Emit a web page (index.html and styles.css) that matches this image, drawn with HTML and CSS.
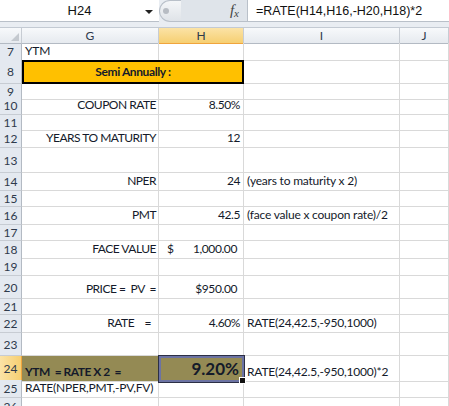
FILE: index.html
```html
<!DOCTYPE html>
<html>

<head>
    <title>YTM - Semi Annually</title>
    <link rel="stylesheet" href="styles.css">
</head>

<body>
    <!-- Formula bar -->
    <div class="formula-bar">
        <div class="name-box">
            <span>H24</span>
            <span class="dropdown"></span>
        </div>
        <div class="splitter"><span class="grip"></span></div>
        <div class="fx"><i>f</i><i class="x">x</i></div>
        <div class="formula">=RATE(H14,H16,-H20,H18)*2</div>
    </div>

    <!-- Sheet -->
    <div class="sheet">
        <div class="row head">
            <div class="corner"></div>
            <div class="ch">G</div>
            <div class="ch active">H</div>
            <div class="ch">I</div>
            <div class="ch">J</div>
        </div>

        <div class="row h17">
            <div class="rh">7</div>
            <div class="c">YTM</div>
            <div class="c"></div>
            <div class="c"></div>
            <div class="c"></div>
        </div>
        <div class="row h24">
            <div class="rh">8</div>
            <div class="c merged title">Semi Annually :</div>
            <div class="c"></div>
            <div class="c"></div>
        </div>
        <div class="row h13">
            <div class="rh">9</div>
            <div class="c"></div>
            <div class="c"></div>
            <div class="c"></div>
            <div class="c"></div>
        </div>
        <div class="row h18">
            <div class="rh">10</div>
            <div class="c right">COUPON RATE</div>
            <div class="c num">8.50%</div>
            <div class="c"></div>
            <div class="c"></div>
        </div>
        <div class="row h14">
            <div class="rh">11</div>
            <div class="c"></div>
            <div class="c"></div>
            <div class="c"></div>
            <div class="c"></div>
        </div>
        <div class="row h19">
            <div class="rh">12</div>
            <div class="c right">YEARS TO MATURITY</div>
            <div class="c num">12</div>
            <div class="c"></div>
            <div class="c"></div>
        </div>
        <div class="row h25">
            <div class="rh">13</div>
            <div class="c"></div>
            <div class="c"></div>
            <div class="c"></div>
            <div class="c"></div>
        </div>
        <div class="row h18">
            <div class="rh">14</div>
            <div class="c right">NPER</div>
            <div class="c num">24</div>
            <div class="c">(years to maturity x 2)</div>
            <div class="c"></div>
        </div>
        <div class="row h16">
            <div class="rh">15</div>
            <div class="c"></div>
            <div class="c"></div>
            <div class="c"></div>
            <div class="c"></div>
        </div>
        <div class="row h18">
            <div class="rh">16</div>
            <div class="c right">PMT</div>
            <div class="c num">42.5</div>
            <div class="c">(face value x coupon rate)/2</div>
            <div class="c"></div>
        </div>
        <div class="row h16">
            <div class="rh">17</div>
            <div class="c"></div>
            <div class="c"></div>
            <div class="c"></div>
            <div class="c"></div>
        </div>
        <div class="row h17">
            <div class="rh">18</div>
            <div class="c right">FACE VALUE</div>
            <div class="c money"><span>$</span><span>1,000.00</span></div>
            <div class="c"></div>
            <div class="c"></div>
        </div>
        <div class="row h18">
            <div class="rh">19</div>
            <div class="c"></div>
            <div class="c"></div>
            <div class="c"></div>
            <div class="c"></div>
        </div>
        <div class="row h23">
            <div class="rh">20</div>
            <div class="c right">PRICE =  PV  =</div>
            <div class="c num currency">$950.00</div>
            <div class="c"></div>
            <div class="c"></div>
        </div>
        <div class="row h16">
            <div class="rh">21</div>
            <div class="c"></div>
            <div class="c"></div>
            <div class="c"></div>
            <div class="c"></div>
        </div>
        <div class="row h18">
            <div class="rh">22</div>
            <div class="c right">RATE    =  </div>
            <div class="c num">4.60%</div>
            <div class="c">RATE(24,42.5,-950,1000)</div>
            <div class="c"></div>
        </div>
        <div class="row h23">
            <div class="rh">23</div>
            <div class="c"></div>
            <div class="c"></div>
            <div class="c"></div>
            <div class="c"></div>
        </div>
        <div class="row h24">
            <div class="rh active">24</div>
            <div class="c olive bold">YTM  = RATE X 2  =</div>
            <div class="c olive num result selected">9.20%<span class="handle"></span></div>
            <div class="c">RATE(24,42.5,-950,1000)*2</div>
            <div class="c"></div>
        </div>
        <div class="row h18">
            <div class="rh">25</div>
            <div class="c">RATE(NPER,PMT,-PV,FV)</div>
            <div class="c"></div>
            <div class="c"></div>
            <div class="c"></div>
        </div>
        <div class="row h18">
            <div class="rh">26</div>
            <div class="c"></div>
            <div class="c"></div>
            <div class="c"></div>
            <div class="c"></div>
        </div>
    </div>
</body>

</html>
```

FILE: styles.css
```css
body {
    margin: 0;
    width: 449px;
    height: 406px;
    overflow: hidden;
    background: white;
    font-family: Lato, "Liberation Sans", sans-serif;
    color: #111;
}

/* formula bar */
.formula-bar {
    display: flex;
    height: 28px;
    box-sizing: border-box;
    padding-bottom: 5px;
    background: #e9edf2;
    border-bottom: 1px solid #c3cad3;
}

.name-box {
    width: 159px;
    display: flex;
    align-items: center;
    justify-content: center;
    position: relative;
    background: white;
    border-bottom: 1px solid #b9c0c9;
    font-family: "Liberation Sans", sans-serif;
    font-size: 13px;
    color: #111;
}

.dropdown {
    position: absolute;
    right: 6px;
    top: 10px;
    border-left: 4px solid transparent;
    border-right: 4px solid transparent;
    border-top: 4px solid #222;
}

.splitter {
    width: 18px;
    background: linear-gradient(#f4f6f8, #dfe3e8);
    border: 1px solid #b9c0c9;
    border-right: none;
    border-radius: 11px 0 0 11px;
    display: flex;
    align-items: center;
    padding-left: 3px;
}

.grip {
    width: 6px;
    height: 6px;
    border-radius: 50%;
    background: #b7bcc3;
}

.fx {
    width: 66px;
    display: flex;
    align-items: center;
    justify-content: flex-end;
    padding-right: 8px;
    box-sizing: border-box;
    background: #dfe4ea;
    border-bottom: 1px solid #b9c0c9;
    font-family: "Liberation Serif", serif;
    font-size: 15px;
    color: #444;
}

.fx .x {
    font-size: 11px;
    margin-top: 5px;
}

.formula {
    flex: 1;
    display: flex;
    align-items: center;
    padding-left: 8px;
    background: white;
    border-left: 1px solid #b9c0c9;
    border-bottom: 1px solid #b9c0c9;
    font-family: "Liberation Sans", sans-serif;
    font-size: 12.5px;
    color: #111;
}

/* sheet grid */
.row {
    display: grid;
    grid-template-columns: 22px 137px 85px 156px 49px;
}

.row > div {
    box-sizing: border-box;
    border-right: 1px solid #d9d9d9;
    border-bottom: 1px solid #d9d9d9;
    display: flex;
    align-items: flex-end;
    white-space: pre;
    font-size: 12px;
    letter-spacing: -0.2px;
    padding: 0 3px 2px;
    min-width: 0;
    color: #141a2a;
}

.head {
    height: 15px;
}

.head > div {
    background: linear-gradient(#f7f9fb, #e6eaef);
    border-right: 1px solid #c7ccd3;
    border-bottom: 1px solid #b3bac3;
    justify-content: center;
    align-items: center;
    padding: 0;
    letter-spacing: 0;
    color: #2e3a4c;
    font-size: 12px;
}

.head > .active {
    background: linear-gradient(#fbe3a6, #f6cf72);
    border-bottom: 1px solid #f0a43c;
}

.head > .corner {
    position: relative;
}

.corner::after {
    content: "";
    position: absolute;
    right: 2px;
    bottom: 2px;
    border-left: 8px solid transparent;
    border-bottom: 8px solid #c4c9cf;
}

.row > .rh {
    background: #e4e9f0;
    border-right: 1px solid #b3bac3;
    border-bottom: 1px solid #c7ccd3;
    justify-content: center;
    align-items: center;
    padding: 0;
    letter-spacing: 0;
    color: #2e3a4c;
    font-size: 12px;
}

.row > .rh.active {
    background: linear-gradient(90deg, #fbe3a6, #f6cf72);
    border-right: 1px solid #f0a43c;
}

.h13 { height: 13px; }
.h14 { height: 14px; }
.h16 { height: 16px; }
.h17 { height: 17px; }
.h18 { height: 18px; }
.h19 { height: 19px; }
.h23 { height: 23px; }
.h24 { height: 24px; }
.h25 { height: 25px; }

.row > .right {
    justify-content: flex-end;
    padding-right: 2px;
    letter-spacing: -0.5px;
}

.row > .num {
    justify-content: flex-end;
    padding-right: 3px;
    letter-spacing: -0.4px;
}

.row > .num.currency {
    padding-right: 6px;
}

.row > .money {
    justify-content: space-between;
    padding: 0 6px 2px 8px;
    letter-spacing: -0.4px;
}

.row > .merged {
    grid-column: span 2;
}

.row > .title {
    background: #ffc000;
    border: 2px solid #000;
    justify-content: center;
    align-items: center;
    font-weight: bold;
    letter-spacing: -0.4px;
}

.row > .olive {
    background: #948a54;
    border-right-color: #948a54;
}

.bold {
    font-weight: bold;
}

.row > .olive.bold {
    letter-spacing: -0.5px;
}

.row > .result {
    font-weight: bold;
    font-size: 17px;
    letter-spacing: 0;
    padding-bottom: 1px;
}

.row > .selected {
    position: relative;
    border: 2px solid #6c73a3;
    box-shadow: 0 0 0 1px #2c2f45;
}

.handle {
    position: absolute;
    right: -4px;
    bottom: -4px;
    width: 5px;
    height: 5px;
    background: #111;
    border: 1px solid white;
}
```
